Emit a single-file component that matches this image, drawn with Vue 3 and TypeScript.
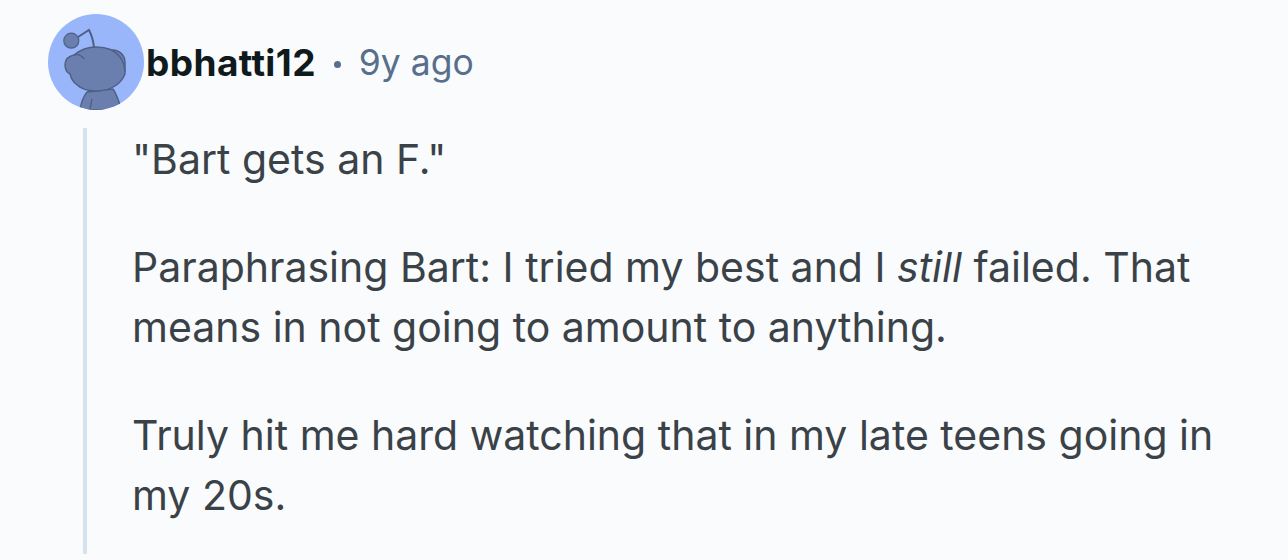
<script setup lang="ts">
const author = 'bbhatti12'
</script>

<template>
  <div class="page">
    <header class="head">
      <svg class="avatar" viewBox="0 0 96 96" aria-hidden="true">
        <circle cx="48" cy="48" r="48" fill="#9ab6fb" />
        <clipPath id="av"><circle cx="48" cy="48" r="48" /></clipPath>
        <g clip-path="url(#av)" stroke="#4f5f86" stroke-width="1.4" fill="#6b7fae">
          <path d="M32 96c1-7 3-13 7-18l26-3c3 4 5 10 7 16v5z" />
          <path d="M44 85l-2 10" fill="none" />
          <path d="M65 36c6 0 12 5 12 12v8z" />
          <path d="M26 41c6-5 14-8 22-8 10 0 19 3 24 10 4 5 5 11 5 17-2 5-5 9-10 12-5 3-12 5-19 5-9 0-16-3-20-7-4-3-5-6-6-10-4-2-5-6-5-9 0-6 4-9 9-10z" />
          <path d="M26 41c4-1 8 1 10 4" fill="none" />
        </g>
        <path d="M46 34c-.5-7-2-12-5-18l-11 7" fill="none" stroke="#4f5f86" stroke-width="2" />
        <circle cx="23.300" cy="26.700" r="7.500" fill="#6b7fae" stroke="#4f5f86" stroke-width="1.200" />
      </svg>
      <span class="author">{{ author }}</span>
      <span class="dot"></span>
      <span class="age">9y ago</span>
    </header>
    <div class="thread">
      <p>"Bart gets an F."</p>
      <p>Paraphrasing Bart: I tried my best and I <em>still</em> failed. That<br />means in not going to amount to anything.</p>
      <p>Truly hit me hard watching that in my late teens going in<br />my 20s.</p>
    </div>
  </div>
</template>

<style>
html, body { margin: 0; background: #f9fbfd; }
</style>

<style scoped>
.page {
  width: 1288px;
  height: 560px;
  box-sizing: border-box;
  padding: 14px 0 0 48px;
  overflow: hidden;
  background: #f9fbfd;
  font-family: Inter, "Liberation Sans", sans-serif;
}
.head {
  display: flex;
  align-items: center;
  height: 96px;
}
.avatar {
  width: 96px;
  height: 96px;
  flex: none;
}
.author {
  margin-left: 2px;
  font-size: 37px;
  font-weight: 700;
  letter-spacing: 0.4px;
  color: #0f1a1c;
}
.dot {
  width: 7px;
  height: 7px;
  margin: 4px 18px 0 18px;
  border-radius: 50%;
  background: #576f8c;
}
.age {
  font-size: 35.5px;
  color: #576f8c;
}
.thread {
  margin: 18px 0 0 35px;
  padding: 1px 0 29px 45px;
  border-left: 4px solid #d5e3ee;
  color: #3a4248;
  font-size: 41px;
  line-height: 60px;
}
p { margin: 0 0 48px; white-space: nowrap; }
p:last-child { margin-bottom: 0; }
</style>
